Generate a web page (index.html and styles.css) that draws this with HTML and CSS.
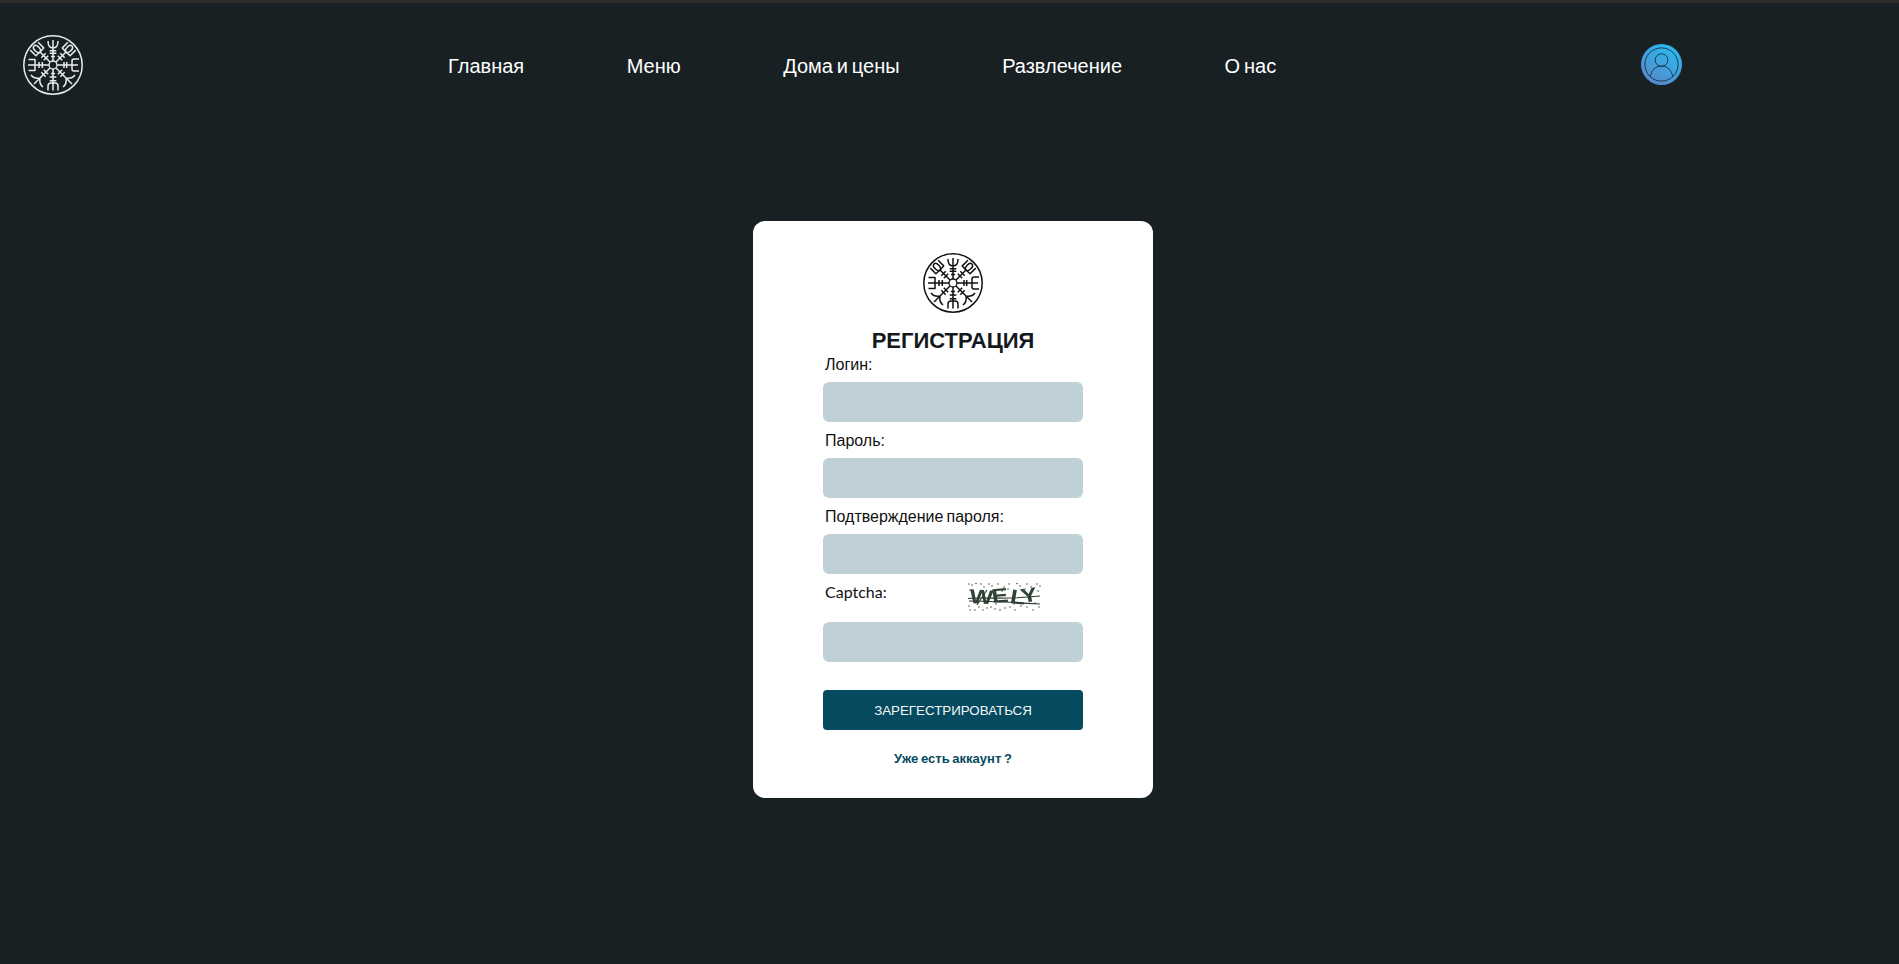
FILE: index.html
```html
<!DOCTYPE html>
<html lang="ru">
<head>
<meta charset="utf-8">
<title>Регистрация</title>
<link rel="stylesheet" href="styles.css">
</head>
<body>
<svg class="defs" width="0" height="0" aria-hidden="true">
  <defs>
    <g id="helm" fill="none" stroke="currentColor" stroke-width="1.500" stroke-linecap="butt" stroke-linejoin="round">
      <circle cx="30" cy="30" r="29.200" stroke-width="1.500"/>
      <circle cx="30" cy="30" r="4" stroke-width="1.300"/>
      <!-- north -->
      <path d="M30 26V5M25 6c0 3 .5 7 5 7s5-4 5-7M26.700 15.700h6.600M26.700 18.300h6.600M28 21.500h4"/>
      <!-- south -->
      <path d="M30 34V55.500M26.700 42h6.600M26.700 45.700h6.600M28 38.500h4M25 55.500V51q0-3 3-3h4q3 0 3 3v4.500"/>
      <!-- east -->
      <path d="M34 30H55M41 27v6M43.700 27v6M56 24h-5q-2 0-2 2v8q0 2 2 2h5"/>
      <!-- west -->
      <path d="M26 30H5M16 27v6M19.300 27v6M12 24v12M5.500 24.500H12M5.500 35.500H12"/>
      <!-- north-east, north-west -->
      <g id="arm-loop">
        <path d="M33 27L43 17M34.800 20.800l4.400 4.400M37.300 18.300l4.400 4.400M44.900 7.300L39.300 12.900L43 17L47.100 20.700L52.700 15.100"/>
        <ellipse cx="46" cy="14" rx="2.600" ry="4.200" transform="rotate(45 46 14)"/>
      </g>
      <use href="#arm-loop" transform="matrix(-1 0 0 1 60 0)"/>
      <!-- south-east, south-west -->
      <g id="arm-fork">
        <path d="M33 33L49 49M34.800 39.200l4.400-4.400M37.300 41.700l4.400-4.400M43 43Q49 44 52 40M43 43Q44 49 40 52"/>
      </g>
      <use href="#arm-fork" transform="matrix(-1 0 0 1 60 0)"/>
    </g>
    <linearGradient id="avatar-fill" x1="0.8" y1="0" x2="0.2" y2="1">
      <stop offset="0" stop-color="#25bdf2"/>
      <stop offset="1" stop-color="#5a86c8"/>
    </linearGradient>
  </defs>
</svg>

<div class="topline"></div>

<header class="header">
  <a class="logo logo-light" href="#" aria-label="Логотип">
    <svg viewBox="0 0 60 60" width="60" height="60"><use href="#helm"/></svg>
  </a>
  <nav class="nav">
    <a href="#">Главная</a>
    <a href="#">Меню</a>
    <a href="#">Дома и цены</a>
    <a href="#">Развлечение</a>
    <a href="#">О нас</a>
  </nav>
  <a class="avatar" href="#" aria-label="Профиль">
    <svg viewBox="0 0 42 42" width="41" height="41">
      <circle cx="21" cy="21" r="21" fill="url(#avatar-fill)"/>
      <g fill="none" stroke="#1e3350" stroke-width="1">
        <circle cx="21" cy="21" r="17"/>
        <circle cx="21" cy="16.500" r="6.500"/>
        <path d="M9.500 33.500c1-6.500 5.500-11 11.500-11s10.500 4.500 11.500 11"/>
      </g>
    </svg>
  </a>
</header>

<main class="main">
  <form class="card">
    <div class="logo-dark">
      <svg viewBox="0 0 60 60" width="60" height="60"><use href="#helm"/></svg>
    </div>
    <h1 class="title">РЕГИСТРАЦИЯ</h1>
    <div class="fields">
      <label class="label" for="login">Логин:</label>
      <input class="input" id="login" type="text">
      <label class="label" for="pass">Пароль:</label>
      <input class="input" id="pass" type="password">
      <label class="label" for="pass2">Подтверждение пароля:</label>
      <input class="input" id="pass2" type="password">
      <div class="captcha-row">
        <label class="label captcha-label" for="captcha">Captcha:</label>
        <svg class="captcha" viewBox="0 0 75 30" width="75" height="30" role="img" aria-label="captcha">
          <g fill="#27352c">
            <circle cx="2" cy="2" r=".7"/><circle cx="5" cy="3" r=".7"/><circle cx="9" cy="1.500" r=".7"/><circle cx="14" cy="2" r=".7"/><circle cx="17" cy="5" r=".7"/><circle cx="22" cy="2" r=".7"/><circle cx="25" cy="4" r=".7"/><circle cx="31" cy="2" r=".7"/><circle cx="37" cy="5" r=".7"/><circle cx="42" cy="2" r=".7"/><circle cx="50" cy="1.500" r=".7"/><circle cx="53" cy="4" r=".7"/><circle cx="60" cy="2" r=".7"/><circle cx="64" cy="5" r=".7"/><circle cx="70" cy="2" r=".7"/><circle cx="73" cy="4" r=".7"/>
            <circle cx="2" cy="24" r=".7"/><circle cx="3" cy="28" r=".7"/><circle cx="8" cy="28" r=".7"/><circle cx="12" cy="25" r=".7"/><circle cx="16" cy="28" r=".7"/><circle cx="20" cy="26" r=".7"/><circle cx="24" cy="25" r=".7"/><circle cx="28" cy="27" r=".7"/><circle cx="33" cy="28" r=".7"/><circle cx="38" cy="26" r=".7"/><circle cx="43" cy="25" r=".7"/><circle cx="48" cy="28" r=".7"/><circle cx="54" cy="24" r=".7"/><circle cx="60" cy="25" r=".7"/><circle cx="66" cy="28" r=".7"/><circle cx="72" cy="25" r=".7"/>
            <circle cx="35" cy="9" r=".7"/><circle cx="47" cy="22" r=".7"/><circle cx="58" cy="7" r=".7"/><circle cx="29" cy="22" r=".7"/><circle cx="68" cy="21" r=".7"/><circle cx="41" cy="7" r=".7"/><circle cx="3" cy="8" r=".7"/><circle cx="71" cy="9" r=".7"/>
          </g>
          <text class="captcha-text" x="2" y="21" textLength="70" lengthAdjust="spacingAndGlyphs" rotate="4 -6 8 -10">WELY</text>
          <path class="captcha-noise" d="M1 16.500C18 15 38 18 73 14M2 19C20 19 40 20 73 22M10 23L20 8"/>
        </svg>
      </div>
      <input class="input" id="captcha" type="text">
      <button class="button" type="button">ЗАРЕГЕСТРИРОВАТЬСЯ</button>
      <a class="link" href="#">Уже есть аккаунт ?</a>
    </div>
  </form>
</main>
</body>
</html>
```

FILE: styles.css
```css
* {
  box-sizing: border-box;
}

html,
body {
  margin: 0;
  height: 100%;
}

body {
  background: #182023;
  font-family: "Liberation Sans", Arial, sans-serif;
  overflow: hidden;
}

.defs {
  display: block;
  height: 0;
}

.topline {
  height: 3px;
  background: #2c2c2c;
}

.header {
  display: flex;
  align-items: center;
  gap: 365px;
  height: 124px;
  padding-left: 23px;
}

.logo {
  display: block;
  height: 60px;
}

.logo-light {
  color: #e9ecec;
}

.nav {
  display: flex;
  gap: 102.5px;
  padding-top: 2px;
}

.nav a {
  color: #fff;
  font-size: 20px;
  line-height: 24px;
  word-spacing: -1.7px;
  text-decoration: none;
}

.avatar {
  display: block;
  height: 41px;
  margin-bottom: 1px;
}

.main {
  display: flex;
  justify-content: center;
  padding-top: 94px;
  padding-left: 7px;
}

.card {
  width: 400px;
  height: 577px;
  padding-top: 32px;
  background: #fff;
  border-radius: 12px;
  display: flex;
  flex-direction: column;
  align-items: center;
}

.logo-dark {
  height: 60px;
  color: #111;
}

.title {
  margin: 15px 0 0;
  font-size: 22px;
  line-height: 26px;
  font-weight: 700;
  color: #14191c;
}

.fields {
  width: 260px;
  display: flex;
  flex-direction: column;
}

.label {
  display: block;
  padding: 1px 0 0 2px;
  margin: 8px 0 7px;
  font-size: 16px;
  line-height: 20px;
  word-spacing: -1.36px;
  color: #111;
}

.label:first-child {
  margin-top: 0;
}

.input {
  display: block;
  width: 260px;
  height: 40px;
  border: 0;
  border-radius: 6px;
  background: #bfd1d7;
}

.captcha-row {
  display: flex;
  align-items: flex-start;
  height: 40px;
  margin-top: 8px;
}

.captcha-label {
  width: 144px;
  margin: 0;
  padding-top: 0;
  font-family: Lato, "Liberation Sans", sans-serif;
}

.captcha {
  display: block;
}

.captcha-text {
  font-family: "Liberation Sans", sans-serif;
  font-size: 20px;
  font-weight: 700;
  fill: #2f4435;
  filter: blur(0.4px);
}

.captcha-noise {
  fill: none;
  stroke: #2a3a30;
  stroke-width: 1.1;
}

.button {
  display: block;
  width: 260px;
  height: 40px;
  margin-top: 28px;
  border: 0;
  border-radius: 4px;
  background: #054a5e;
  color: #f2f7f8;
  font-family: "Liberation Sans", Arial, sans-serif;
  font-size: 13.333px;
}

.link {
  display: block;
  margin-top: 21px;
  text-align: center;
  font-size: 13px;
  line-height: 15px;
  word-spacing: -0.9px;
  font-weight: 700;
  color: #054a5e;
  text-decoration: none;
}
```
